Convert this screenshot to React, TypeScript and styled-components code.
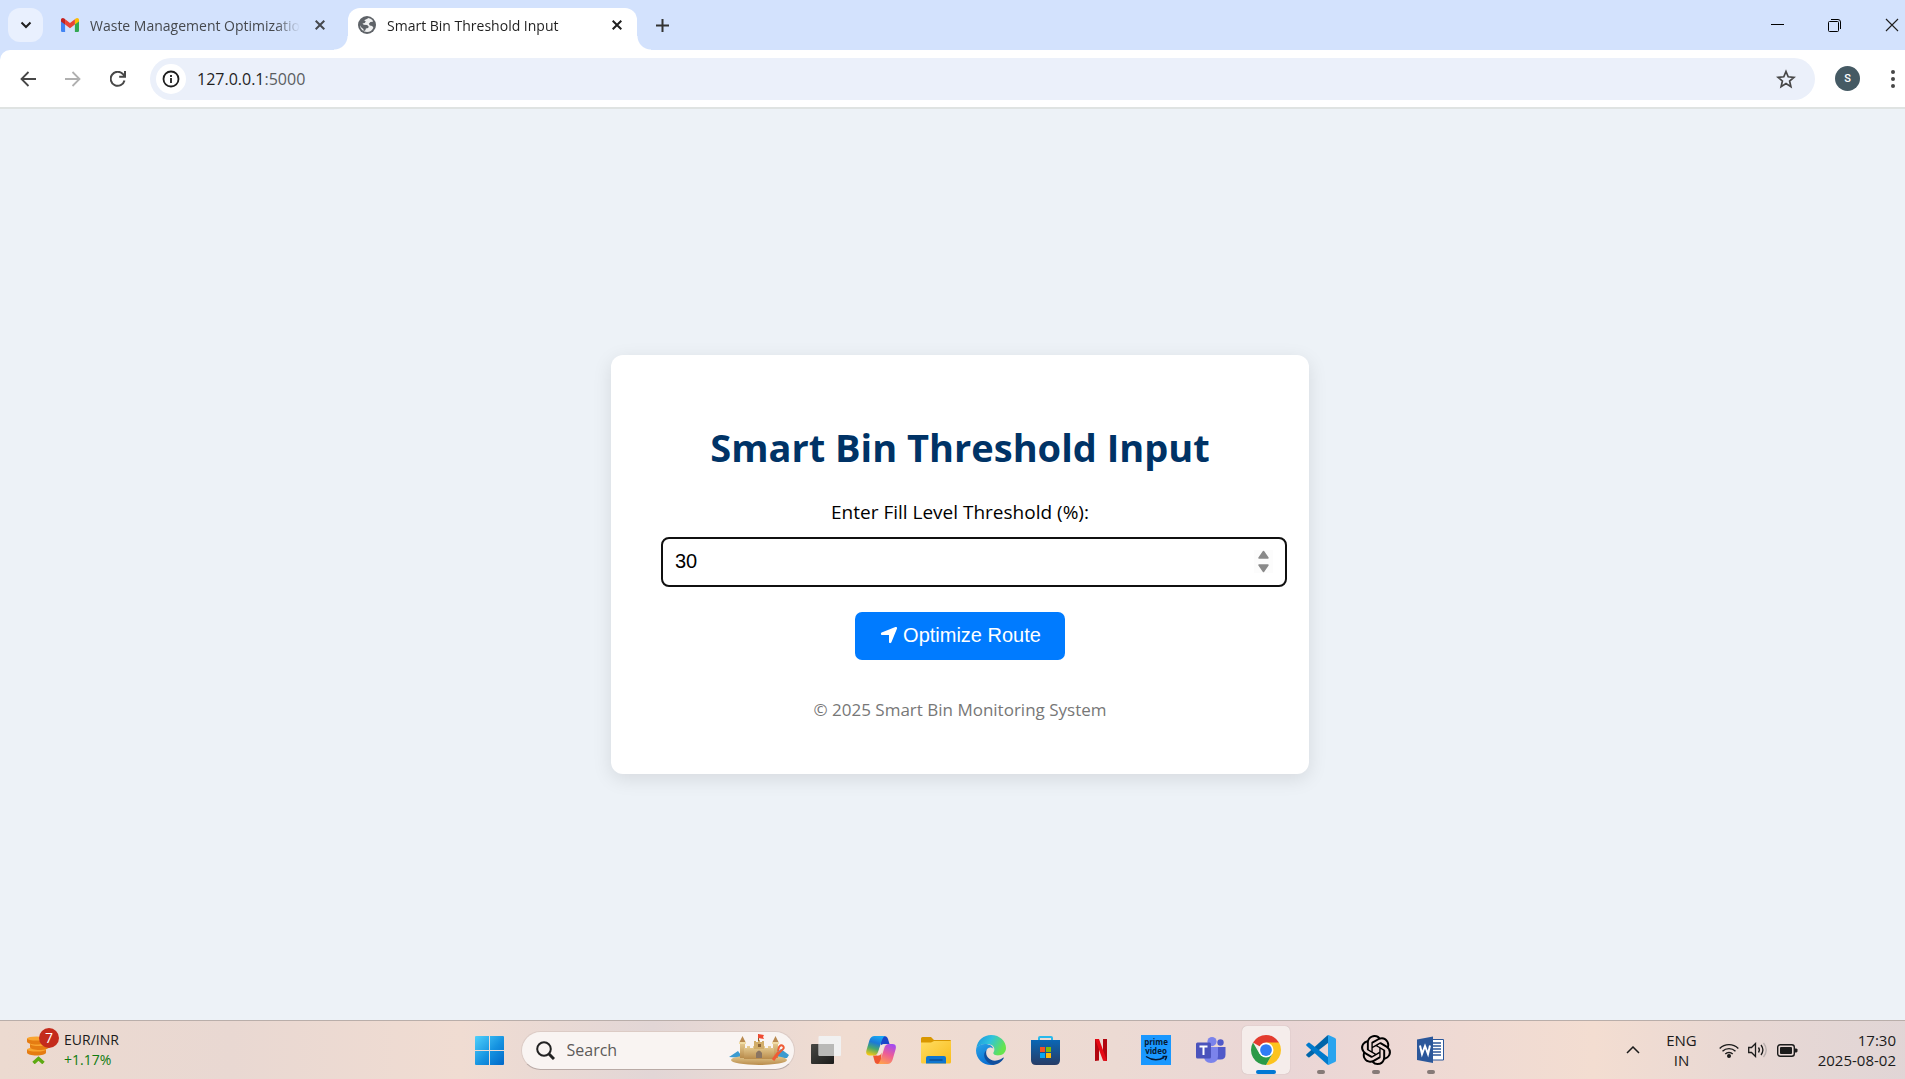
import React from "react";
import styled, { createGlobalStyle, css } from "styled-components";
import { FaLocationArrow } from "react-icons/fa6";

const ui = `"Open Sans", "Noto Sans", sans-serif`;

const GlobalStyle = createGlobalStyle`
  *, *::before, *::after { box-sizing: border-box; }
  html, body { margin: 0; overflow-x: hidden; }
  body { font-family: ${ui}; font-size: 14px; color: #1f1f1f; }
  button { border: 0; padding: 0; background: none; font: inherit; color: inherit; cursor: pointer; }
  svg { display: block; flex: none; }
`;

/* The maximised window runs 15px past the right edge of the viewport. */
const Desktop = styled.div`
  display: flex;
  flex-direction: column;
  width: calc(100% + 15px);
  height: 100vh;
`;

/* ---------- browser chrome ---------- */

const TabStrip = styled.header`
  display: flex;
  align-items: flex-end;
  gap: 8px;
  padding: 8px 0 0 8px;
  background: #d3e2fd;
`;

const StripButton = styled.button<{ $filled?: boolean }>`
  display: grid;
  place-items: center;
  width: 35px;
  height: 34px;
  margin-bottom: 8px;
  border-radius: 12px;
  background: ${(p) => (p.$filled ? "#e9f0fe" : "transparent")};
`;

const Tab = styled.div<{ $active?: boolean }>`
  position: relative;
  display: flex;
  align-items: center;
  width: 289px;
  height: 42px;
  padding: 0 10px 8px;
  border-radius: 12px 12px 0 0;
  color: #45484d;
  ${(p) =>
    p.$active &&
    css`
      background: #fff;
      color: #1f1f1f;
      &::before,
      &::after {
        content: "";
        position: absolute;
        bottom: 0;
        width: 14px;
        height: 14px;
      }
      &::before {
        right: 100%;
        background: radial-gradient(circle at 0 0, transparent 13px, #fff 14px);
      }
      &::after {
        left: 100%;
        background: radial-gradient(circle at 100% 0, transparent 13px, #fff 14px);
      }
    `}
`;

const TabTitle = styled.button`
  flex: 1;
  min-width: 0;
  margin: 0 10px 0 11px;
  padding-top: 2px;
  overflow: hidden;
  white-space: nowrap;
  text-align: left;
  line-height: 20px;
  mask-image: linear-gradient(to right, #000 calc(100% - 24px), transparent);
`;

const TabClose = styled.button`
  display: grid;
  place-items: center;
  width: 20px;
  height: 20px;
`;

const WindowControls = styled.div`
  display: flex;
  align-self: stretch;
  margin-left: auto;
`;

const WindowButton = styled.button`
  display: grid;
  place-items: center;
  width: 57px;
  height: 34px;
`;

const ToolbarBack = styled.div`
  background: #d3e2fd;
`;

const Toolbar = styled.nav`
  display: flex;
  align-items: center;
  gap: 10px;
  height: 59px;
  padding: 0 10px;
  border-bottom: 2px solid #dfe3e2;
  border-radius: 10px 0 0 0;
  background: #fff;
`;

const ToolButton = styled.button`
  display: grid;
  place-items: center;
  width: 35px;
  height: 35px;
`;

const Omnibox = styled.div`
  display: flex;
  flex: 1;
  align-items: center;
  height: 42px;
  margin: 0 5px;
  padding: 0 12px 0 6px;
  border-radius: 21px;
  background: #ebf0fa;
`;

const SiteInfo = styled.button`
  display: grid;
  place-items: center;
  width: 30px;
  height: 30px;
  border-radius: 50%;
  background: #fff;
`;

const Address = styled.div`
  flex: 1;
  margin-left: 11px;
  font-size: 16px;
  line-height: 24px;
  color: #5a5d61;
`;

const Host = styled.span`
  color: #1f1f1f;
`;

const Avatar = styled.span`
  display: grid;
  place-items: center;
  width: 25px;
  height: 25px;
  border-radius: 50%;
  background: #455a64;
  color: #fff;
  font: 500 11px/25px Roboto, sans-serif;
`;

/* ---------- web page ---------- */

const Page = styled.main`
  display: flex;
  flex: 1;
  align-items: center;
  justify-content: center;
  background: #edf2f7;
`;

const Card = styled.section`
  width: 698px;
  padding: 50px;
  border-radius: 12px;
  background: #fff;
  box-shadow: 0 5px 19px rgba(0, 0, 0, 0.1);
  text-align: center;
`;

const Title = styled.h1`
  margin: 15px 0 25px;
  color: #003366;
  font-size: 38px;
  font-weight: 700;
  line-height: 54px;
`;

const Label = styled.label`
  display: block;
  color: #000;
  font-size: 19px;
  line-height: 27px;
`;

const spinner = encodeURIComponent(
  `<svg xmlns="http://www.w3.org/2000/svg" viewBox="0 0 19 23"><rect width="19" height="23" fill="#fcfcfc"/><g fill="#8a8a8a" stroke="#8a8a8a" stroke-width="1.5" stroke-linejoin="round"><path d="M9.500 1.500L14 8H5z"/><path d="M9.500 21.500L14 15H5z"/></g></svg>`
);

const NumberInput = styled.input`
  box-sizing: content-box;
  display: block;
  width: 100%;
  height: 22px;
  margin: 11px 0 25px;
  padding: 11px 12px 13px;
  border: 2px solid #101010;
  border-radius: 8px;
  outline: 0;
  background: #fff;
  color: #000;
  font: 20px/22px "Liberation Sans", Arial, sans-serif;
  &::-webkit-inner-spin-button {
    appearance: none;
    width: 19px;
    height: 23px;
    opacity: 1;
    background: url("data:image/svg+xml,${spinner}") no-repeat center / 19px 23px;
  }
`;

const Submit = styled.button`
  display: inline-flex;
  align-items: center;
  gap: 4px;
  height: 48px;
  padding: 0 24px 2px;
  border-radius: 7px;
  background: #007bff;
  color: #fff;
  font: 20px/24px "Liberation Sans", Arial, sans-serif;
  vertical-align: top;
`;

const Footer = styled.footer`
  margin-top: 36px;
  color: #777;
  font-size: 17px;
  line-height: 28px;
`;

/* ---------- taskbar ---------- */

const Taskbar = styled.footer`
  display: grid;
  grid-template-columns: 1fr auto 1fr;
  align-items: center;
  height: 59px;
  padding: 0 24px;
  border-top: 1px solid #b9aeaa;
  background: linear-gradient(
    90deg,
    #ecdad0 0%,
    #e9d8d2 12%,
    #f0dcd2 24%,
    #e2d6d6 34%,
    #f0dcd1 44%,
    #ecdad3 58%,
    #ead6d6 67%,
    #f3ddd1 83%,
    #e8d8d4 91%,
    #e0d5d6 100%
  );
  color: #1b1b1b;
  line-height: 20px;
`;

const Widget = styled.button`
  display: flex;
  align-items: center;
  justify-self: start;
  gap: 4px;
  text-align: left;
`;

const WidgetIcon = styled.span`
  position: relative;
  padding: 6px 0 0 2px;
  width: 36px;
  height: 40px;
`;

const Badge = styled.span`
  position: absolute;
  top: -2px;
  right: 1px;
  width: 20px;
  height: 20px;
  border-radius: 50%;
  background: #c42b1c;
  color: #fff;
  font-size: 14px;
  text-align: center;
`;

const Gain = styled.span`
  color: #0f7b0f;
`;

const Stack = styled.span<{ $align?: string }>`
  display: flex;
  flex-direction: column;
  align-items: ${(p) => p.$align ?? "flex-start"};
`;

const Apps = styled.div`
  display: flex;
  align-items: center;
  gap: 7px;
`;

const AppButton = styled.button<{ $active?: boolean; $open?: boolean }>`
  position: relative;
  display: grid;
  place-items: center;
  width: 48px;
  height: 48px;
  border-radius: 5px;
  background: ${(p) => (p.$active ? "#f5edeb" : "transparent")};
  box-shadow: ${(p) => (p.$active ? "0 0 1px rgba(0, 0, 0, 0.25)" : "none")};
  ${(p) =>
    (p.$active || p.$open) &&
    css`
      &::after {
        content: "";
        position: absolute;
        bottom: 0;
        left: 50%;
        width: ${p.$active ? 20 : 8}px;
        height: 4px;
        border-radius: 2px;
        background: ${p.$active ? "#0078d4" : "#857a77"};
        transform: translateX(-50%);
      }
    `}
`;

const SearchBox = styled.label`
  display: flex;
  align-items: center;
  width: 274px;
  height: 39px;
  padding: 0 5px 0 14px;
  border: 1px solid #dccbc5;
  border-bottom-color: #b9aaa6;
  border-radius: 20px;
  background: #f9f4f2;
`;

const SearchInput = styled.input`
  flex: 1;
  min-width: 0;
  margin-left: 12px;
  padding: 0;
  border: 0;
  outline: 0;
  background: none;
  font: 16px/22px ${ui};
  &::placeholder {
    color: #5d5a59;
    opacity: 1;
  }
`;

const Tray = styled.div`
  display: flex;
  align-items: center;
  justify-self: end;
  font-size: 15px;
`;

const TrayButton = styled.button<{ $gap: number }>`
  display: flex;
  align-items: center;
  gap: 9px;
  margin-left: ${(p) => p.$gap}px;
`;

/* ---------- drawings ---------- */

const Gmail = () => (
  <svg width="18" height="14" viewBox="0 0 18 14">
    <path d="M0 2.500V12.800Q0 14 1.200 14H4.100V5L0 2z" fill="#4285f4" />
    <path d="M13.900 14H16.800Q18 14 18 12.800V2L13.900 5z" fill="#34a853" />
    <path d="M13.900 1.300V6.500L18 3.400V1.800C18 .2 16 -.6 14.700.6z" fill="#fbbc04" />
    <path d="M4.100 6.500V1.300L9 5l4.900-3.700v5.200L9 10.200z" fill="#ea4335" />
    <path d="M0 1.800V3.400L4.100 6.500V1.300L3.300.6C2-.6 0 .2 0 1.800z" fill="#c5221f" />
  </svg>
);

const Globe = () => (
  <svg width="18" height="18" viewBox="0 0 18 18">
    <circle cx="9" cy="9" r="9" fill="#5f6368" />
    <path
      d="M10.500 2.100 8.300 3.200 6.200 4.300l1.600 1.200-1.100 1.600-2.200.3 1.200 1.300 3.400.2 1.600 1.500-.5 1.700-2.300.5-.5 1.600-1.700 1-.3-2.200-1.800-1.300L2 9.200A7 7 0 0 0 9 16a7 7 0 0 0 6.400-4.200l-1.200-1.700-2.400-.6-1-1.700 1.600-1.800 2.300-.3.400-.7A7 7 0 0 0 10.500 2.100z"
      fill="#fff"
      opacity=".9"
    />
  </svg>
);

const Cross = ({ size = 10, weight = 2 }) => (
  <svg width={size} height={size} viewBox="0 0 10 10">
    <path d="M.7.7l8.600 8.600M9.300.7L.7 9.300" stroke="currentColor" strokeWidth={weight} />
  </svg>
);

const Arrow = ({ flip = false, color = "#474747" }) => (
  <svg width="16" height="16" viewBox="0 0 16 16" fill="none" stroke={color} strokeWidth="1.800">
    <path d={flip ? "M0 8h14M7.500 1l7 7-7 7" : "M16 8H2M8.500 1l-7 7 7 7"} />
  </svg>
);

const Castle = () => (
  <svg width="60" height="32" viewBox="0 0 60 32">
    <defs>
      <linearGradient id="sand" x2="0" y2="1">
        <stop stopColor="#e8cf95" />
        <stop offset="1" stopColor="#b98c4c" />
      </linearGradient>
    </defs>
    <path d="M0 23l9-6 5 7zM46 20l6-5 8 6-2 3H46z" fill="#3c9bd0" />
    <ellipse cx="30" cy="26" rx="28" ry="5" fill="url(#sand)" />
    <path d="M11 8h5v16h-5zM44 8h5v16h-5z" fill="url(#sand)" />
    <path d="M15 14h3v-2h3v2h3v-2h3v2h6v-2h3v2h3v-2h3v2h3v11H15z" fill="url(#sand)" />
    <path d="M25 7h2v1h2V6h2v2h2V7h2v8H25z" fill="#d2ad69" />
    <path d="M13.500 2l3 6h-6zM46.500 2l3 6h-6z" fill="#b98a50" />
    <path d="M10 8h7v2h-7zM43 8h7v2h-7z" fill="#f0dca6" />
    <path d="M27 24v-5q3-5 6 0v5z" fill="#8a7562" />
    <path d="M29 10h3v3h-3z" fill="#8a6539" />
    <path d="M29.500 0v7" stroke="#8b5a2b" />
    <path d="M29 0l6 1-1 2 1 2-6-1z" fill="#ef4b32" />
    <path d="M44 26l6-8" stroke="#ef5b35" strokeWidth="3" />
    <path d="M49 17l1-4q2-3 4-1t-1 4l-3 3" stroke="#ef5b35" strokeWidth="2" fill="none" />
  </svg>
);

const Coins = () => (
  <svg width="24" height="28" viewBox="0 0 24 28">
    {[11, 5.5, 0].map((y, i) => (
      <g key={y} transform={`translate(${i === 1 ? 4 : 1} ${y})`}>
        <path d="M0 2.500v3c0 4 19 4 19 0v-3z" fill="#e57c12" />
        <ellipse cx="9.500" cy="2.500" rx="9.500" ry="2" fill="#f9a530" />
      </g>
    ))}
    <path d="M7.500 27l5-4.500 5 4.500" fill="none" stroke="#5eaa12" strokeWidth="3.500" />
  </svg>
);

const Windows = () => (
  <svg width="29" height="29" viewBox="0 0 29 29">
    <defs>
      <linearGradient id="win" x2="1" y2="1">
        <stop stopColor="#4fd0fb" />
        <stop offset=".55" stopColor="#1592e0" />
        <stop offset="1" stopColor="#0067c8" />
      </linearGradient>
    </defs>
    <path
      d="M1 0H14V14H0V1Q0 0 1 0zM15 0H28Q29 0 29 1V14H15zM0 15H14V29H1Q0 29 0 28zM15 15H29V28Q29 29 28 29H15z"
      fill="url(#win)"
    />
  </svg>
);

const TaskView = () => (
  <svg width="30" height="30" viewBox="0 0 30 30">
    <defs>
      <linearGradient id="tvd" x2="1" y2="1">
        <stop stopColor="#484844" />
        <stop offset="1" stopColor="#1c1c1b" />
      </linearGradient>
    </defs>
    <rect x="0" y="9" width="23" height="20" rx="1" fill="url(#tvd)" />
    <rect x="7.500" y="1" width="22.500" height="20" rx="1" fill="#f1f1f1" />
    <path d="M8 9h15v12H8z" fill="#b9b9b7" />
  </svg>
);

const Copilot = () => (
  <svg width="30" height="28" viewBox="0 0 30 28">
    <defs>
      <linearGradient id="cpa" x1=".6" y1="0" x2=".3" y2="1">
        <stop stopColor="#18a7f2" />
        <stop offset=".35" stopColor="#1b79d8" />
        <stop offset=".65" stopColor="#4aa86b" />
        <stop offset="1" stopColor="#f3c712" />
      </linearGradient>
      <linearGradient id="cpb" x1=".7" y1="0" x2=".3" y2="1">
        <stop stopColor="#a44bf0" />
        <stop offset=".5" stopColor="#ee5d95" />
        <stop offset="1" stopColor="#ffa04f" />
      </linearGradient>
    </defs>
    <path d="M15 0h3q3 0 4 3l1.500 5H19q-3 0-4 3z" fill="#1946c9" />
    <path d="M15 28h-3q-3 0-3.500-3L7 19.500h4.500q3 0 4-3z" fill="#ef5530" />
    <path d="M8.500 0H19q-2 1-3 4l-4 12q-1.200 3.500-4.500 3.500H3.500Q-.7 19.500.4 14.500L3.500 4Q5 0 8.500 0z" fill="url(#cpa)" />
    <path d="M21.500 28H11.500q2-1 3-4l4-12.500Q19.500 8 23 8h3.500q4.200 0 3.200 5L26.500 24q-1.500 4-5 4z" fill="url(#cpb)" />
    <path d="M14.500 9.500q.8-1.500 4.500-1.500-1 1-1.500 3l-2.500 7q-.8 1.500-4 1.500 1-1 1.500-3z" fill="#f4e3de" />
  </svg>
);

const Folder = () => (
  <svg width="30" height="27" viewBox="0 0 30 27">
    <defs>
      <linearGradient id="fold" x2="1" y2="1">
        <stop stopColor="#ffdc61" />
        <stop offset="1" stopColor="#f9bd1b" />
      </linearGradient>
    </defs>
    <path d="M0 1.500Q0 0 1.500 0H10l3 3h16q1 0 1 1v4H0z" fill="#d99700" />
    <path d="M0 5.500h10L13 4h17v21q0 1.500-1.500 1.500h-27Q0 26.500 0 25z" fill="url(#fold)" />
    <path d="M5 26.500V21q0-2 2-2h16q2 0 2 2v5.500z" fill="#0f76cf" />
    <path d="M9 23h12" stroke="#0b4f96" strokeWidth="1.500" strokeLinecap="round" />
  </svg>
);

const Edge = () => (
  <svg width="30" height="30" viewBox="0 0 30 30">
    <defs>
      <linearGradient id="edt" x2="1" y2=".4">
        <stop stopColor="#1a8fe0" />
        <stop offset=".5" stopColor="#2fc3dd" />
        <stop offset="1" stopColor="#66e44d" />
      </linearGradient>
      <linearGradient id="edl" x2=".5" y2="1">
        <stop stopColor="#2aa5e8" />
        <stop offset="1" stopColor="#0a6fd2" />
      </linearGradient>
    </defs>
    <path d="M.3 13C1.500 5 8 0 15 0c9 0 15 6.500 15 13 0 5-4 7.500-8 7.500-3.500 0-5.500-1.500-4.500-3 2-3 1-8-6-8.500C6 8.600 2 10.500.3 13z" fill="url(#edt)" />
    <path d="M.3 13C3 8.500 10 8 14 10c2 1 3 2.500 3.200 4-2-3-7-1.500-7.500 3.500C9.200 23 13 28 18 29.700 9 31.500 0 25 0 15.500z" fill="url(#edl)" />
    <path d="M10.500 15c-2 7 4.500 12 11 10.300 2.500-.5 4-1.600 5.500-2.600.6-.3 1 .2.600.9C25.500 27 21.500 29.800 17 30 8 27 6 19 10.500 15z" fill="#104f9e" />
    <path d="M12 14.500c1.500-2.500 5-2.500 5.200.5.200 1-.5 2-.3 3 .7 2.500 5 3.300 8 2.100-3 3.500-8 3.500-11 .5-2-2-2.700-4.500-1.900-6.100z" fill="#f0dfd7" />
  </svg>
);

const Store = () => (
  <svg width="29" height="29" viewBox="0 0 29 29">
    <defs>
      <linearGradient id="sto" x2="0" y2="1">
        <stop stopColor="#0a67b5" />
        <stop offset="1" stopColor="#273c66" />
      </linearGradient>
    </defs>
    <path d="M8 6V2q0-1 1-1h11q1 0 1 1v4" fill="none" stroke="#28b9ec" strokeWidth="2" />
    <path d="M0 4h29v20q0 5-5 5H5q-5 0-5-5z" fill="url(#sto)" />
    <path d="M9 11h5v5H9z" fill="#f35325" />
    <path d="M15 11h5v5h-5z" fill="#81bc06" />
    <path d="M9 17h5v5H9z" fill="#05a6f0" />
    <path d="M15 17h5v5h-5z" fill="#ffba08" />
  </svg>
);

const Netflix = () => (
  <svg width="12" height="22" viewBox="0 0 12 22">
    <path d="M0 0h4v21.500L0 22zM8 0h4v22l-4-.5z" fill="#b1060f" />
    <path d="M0 0h4l8 22-4-.5z" fill="#e50914" />
  </svg>
);

const PrimeVideo = () => (
  <svg width="30" height="30" viewBox="0 0 30 30">
    <path d="M0 0h30v30H0z" fill="#1a98ff" />
    <g fill="#071a33" fontFamily="Open Sans, sans-serif" fontWeight="700" fontSize="8" textAnchor="middle">
      <text x="15" y="10">prime</text>
      <text x="15" y="19">video</text>
    </g>
    <path d="M5 21.500q9 6 18 1M21.500 21.500h4q0 1.500-1.500 3.500" fill="none" stroke="#071a33" strokeWidth="1.500" />
  </svg>
);

const Teams = () => (
  <svg width="30" height="27" viewBox="0 0 30 27">
    <circle cx="24.500" cy="5.500" r="3.200" fill="#5059c9" />
    <path d="M20 10h9.500v7.500q0 5-5 5H20z" fill="#5059c9" />
    <circle cx="16" cy="4.600" r="4.600" fill="#7b83eb" />
    <path d="M8 10h14v9q0 7-7 7t-7-7z" fill="#7b83eb" />
    <rect y="5.500" width="15" height="16" rx="1.500" fill="#4b53bc" />
    <path d="M3.500 9.500h8M7.500 9.500V18" stroke="#fff" strokeWidth="2" />
  </svg>
);

const Chrome = () => (
  <svg width="30" height="30" viewBox="0 0 48 48">
    <path d="M24 24L3.220 12A24 24 0 0 1 44.780 12z" fill="#e33b2e" />
    <path d="M24 12H44.780A24 24 0 0 1 24 48L34.400 30z" fill="#fcc31e" />
    <path d="M13.600 30L3.220 12A24 24 0 0 0 24 48L34.400 30z" fill="#2b9a47" />
    <circle cx="24" cy="24" r="12" fill="#fff" />
    <circle cx="24" cy="24" r="9.400" fill="#2f7cf6" />
  </svg>
);

const VsCode = () => (
  <svg width="30" height="30" viewBox="0 0 30 30">
    <path d="M22 8L3.500 22.300q-.6.400-1.200 0L.5 20.700q-.7-.7 0-1.400L21 .7 22.500 0z" fill="#0065a9" />
    <path d="M22 22L3.500 7.700q-.6-.4-1.200 0L.5 9.300q-.7.700 0 1.400L21 29.300l1.500.7z" fill="#007acc" />
    <path d="M22 .2q.4-.3 1 0l6 2.900q1 .5 1 1.500v20.800q0 1-1 1.500l-6 2.900q-.8.300-1.500-.5.500.2.500-.8v-27q0-1-.5-.8z" fill="#2aa4ee" />
  </svg>
);

const OpenAI = () => (
  <svg width="30" height="30" viewBox="0 0 24 24">
    <path d="M22.2819 9.8211a5.9847 5.9847 0 0 0-.5157-4.9108 6.0462 6.0462 0 0 0-6.5098-2.9A6.0651 6.0651 0 0 0 4.9807 4.1818a5.9847 5.9847 0 0 0-3.9977 2.9 6.0462 6.0462 0 0 0 .7427 7.0966 5.98 5.98 0 0 0 .511 4.9107 6.051 6.051 0 0 0 6.5146 2.9001A5.9847 5.9847 0 0 0 13.2599 24a6.0557 6.0557 0 0 0 5.7718-4.2058 5.9894 5.9894 0 0 0 3.9977-2.9001 6.0557 6.0557 0 0 0-.7475-7.0729zm-9.022 12.6081a4.4755 4.4755 0 0 1-2.8764-1.0408l.1419-.0804 4.7783-2.7582a.7948.7948 0 0 0 .3927-.6813v-6.7369l2.02 1.1686a.071.071 0 0 1 .038.052v5.5826a4.504 4.504 0 0 1-4.4945 4.4944zm-9.6607-4.1254a4.4708 4.4708 0 0 1-.5346-3.0137l.142.0852 4.783 2.7582a.7712.7712 0 0 0 .7806 0l5.8428-3.3685v2.3324a.0804.0804 0 0 1-.0332.0615L9.74 19.9502a4.4992 4.4992 0 0 1-6.1408-1.6464zM2.3408 7.8956a4.485 4.485 0 0 1 2.3655-1.9728V11.6a.7664.7664 0 0 0 .3879.6765l5.8144 3.3543-2.0201 1.1685a.0757.0757 0 0 1-.071 0l-4.8303-2.7865A4.504 4.504 0 0 1 2.3408 7.872zm16.5963 3.8558L13.1038 8.364 15.1192 7.2a.0757.0757 0 0 1 .071 0l4.8303 2.7913a4.4944 4.4944 0 0 1-.6765 8.1042v-5.6772a.79.79 0 0 0-.407-.667zm2.0107-3.0231l-.142-.0852-4.7735-2.7818a.7759.7759 0 0 0-.7854 0L9.409 9.2297V6.8974a.0662.0662 0 0 1 .0284-.0615l4.8303-2.7866a4.4992 4.4992 0 0 1 6.6802 4.66zM8.3065 12.863l-2.02-1.1638a.0804.0804 0 0 1-.038-.0567V6.0742a4.4992 4.4992 0 0 1 7.3757-3.4537l-.142.0805L8.704 5.459a.7948.7948 0 0 0-.3927.6813zm1.0976-2.3654l2.602-1.4998 2.6069 1.4998v2.9994l-2.5974 1.4997-2.6067-1.4997Z" />
  </svg>
);

const Word = () => (
  <svg width="28" height="28" viewBox="0 0 28 28">
    <path d="M14 3.500h12.500V24H14z" fill="#fff" stroke="#2b579a" />
    <path d="M16 7h8M16 10h8M16 13h8M16 16h8M16 19h8" stroke="#2b579a" strokeWidth="1.500" />
    <path d="M0 3.500L16 .5v26.500L0 24z" fill="#2b579a" />
    <path d="M3 9.500l2 8.500L8 10l3 8 2-8.500" fill="none" stroke="#fff" strokeWidth="2" />
  </svg>
);

const apps = [
  { name: "Task view", Icon: TaskView },
  { name: "Copilot", Icon: Copilot },
  { name: "File Explorer", Icon: Folder },
  { name: "Edge", Icon: Edge },
  { name: "Store", Icon: Store },
  { name: "Netflix", Icon: Netflix },
  { name: "Prime Video", Icon: PrimeVideo },
  { name: "Teams", Icon: Teams },
  { name: "Chrome", Icon: Chrome, active: true },
  { name: "VS Code", Icon: VsCode, open: true },
  { name: "ChatGPT", Icon: OpenAI, open: true },
  { name: "Word", Icon: Word, open: true },
];

export default function App() {
  return (
    <>
      <GlobalStyle />
      <Desktop>
        <TabStrip>
          <StripButton $filled aria-label="Search tabs">
            <svg width="12" height="8" viewBox="0 0 12 8">
              <path d="M1.500 1.500L6 6l4.500-4.500" fill="none" stroke="#1f1f1f" strokeWidth="2" />
            </svg>
          </StripButton>
          <Tab>
            <Gmail />
            <TabTitle>Waste Management Optimization</TabTitle>
            <TabClose aria-label="Close tab"><Cross /></TabClose>
          </Tab>
          <Tab $active>
            <Globe />
            <TabTitle>Smart Bin Threshold Input</TabTitle>
            <TabClose aria-label="Close tab"><Cross /></TabClose>
          </Tab>
          <StripButton aria-label="New tab">
            <svg width="13" height="13" viewBox="0 0 13 13">
              <path d="M6.500 0v13M0 6.500h13" stroke="#333" strokeWidth="2" />
            </svg>
          </StripButton>
          <WindowControls>
            <WindowButton aria-label="Minimize">
              <svg width="13" height="13" viewBox="0 0 13 13"><path d="M0 5.500h13" stroke="#000" /></svg>
            </WindowButton>
            <WindowButton aria-label="Restore">
              <svg width="13" height="13" viewBox="0 0 13 13" fill="none" stroke="#000">
                <rect x=".5" y="2.500" width="10" height="10" rx="1" />
                <path d="M3 .5h7q2.500 0 2.500 2.500v7" />
              </svg>
            </WindowButton>
            <WindowButton aria-label="Close"><Cross size={14} weight={0.8} /></WindowButton>
          </WindowControls>
        </TabStrip>
        <ToolbarBack>
          <Toolbar>
            <ToolButton aria-label="Back"><Arrow /></ToolButton>
            <ToolButton aria-label="Forward"><Arrow flip color="#b0b0b0" /></ToolButton>
            <ToolButton aria-label="Reload">
              <svg width="16" height="16" viewBox="0 0 16 16" fill="none" stroke="#474747" strokeWidth="2">
                <path d="M14.500 9.500A7 7 0 1 1 13 3.200L15 5.500M15 0v5.800H9.200" />
              </svg>
            </ToolButton>
            <Omnibox>
              <SiteInfo aria-label="Site information">
                <svg width="18" height="18" viewBox="0 0 18 18" fill="none" stroke="#1f1f1f" strokeWidth="1.800">
                  <circle cx="9" cy="9" r="7.500" />
                  <path d="M9 8v5M9 5v2" />
                </svg>
              </SiteInfo>
              <Address><Host>127.0.0.1</Host>:5000</Address>
              <ToolButton aria-label="Bookmark">
                <svg width="20" height="20" viewBox="0 0 20 20">
                  <path d="M10 2.500l2.200 5.300 5.700.5-4.300 3.700 1.300 5.600L10 14.600l-4.900 3 1.300-5.600-4.300-3.700 5.700-.5z" fill="none" stroke="#474747" strokeWidth="1.700" />
                </svg>
              </ToolButton>
            </Omnibox>
            <ToolButton aria-label="Profile"><Avatar>S</Avatar></ToolButton>
            <ToolButton aria-label="Menu">
              <svg width="4" height="18" viewBox="0 0 4 18" fill="#474747">
                <circle cx="2" cy="2" r="2" /><circle cx="2" cy="9" r="2" /><circle cx="2" cy="16" r="2" />
              </svg>
            </ToolButton>
          </Toolbar>
        </ToolbarBack>

        <Page>
          <Card>
            <Title>Smart Bin Threshold Input</Title>
            <Label htmlFor="threshold">Enter Fill Level Threshold (%):</Label>
            <NumberInput id="threshold" type="number" defaultValue={30} />
            <Submit type="button"><FaLocationArrow size={20} />Optimize Route</Submit>
            <Footer>© 2025 Smart Bin Monitoring System</Footer>
          </Card>
        </Page>

        <Taskbar>
          <Widget>
            <WidgetIcon><Coins /><Badge>7</Badge></WidgetIcon>
            <Stack>
              <span>EUR/INR</span>
              <Gain>+1.17%</Gain>
            </Stack>
          </Widget>
          <Apps>
            <AppButton aria-label="Start"><Windows /></AppButton>
            <SearchBox>
              <svg width="19" height="19" viewBox="0 0 19 19" fill="none" stroke="#222" strokeWidth="2">
                <circle cx="8" cy="8" r="6.800" />
                <path d="M13 13l5 5" strokeWidth="3" />
              </svg>
              <SearchInput placeholder="Search" aria-label="Search" />
              <Castle />
            </SearchBox>
            {apps.map(({ name, Icon, active, open }) => (
              <AppButton key={name} aria-label={name} $active={active} $open={open}><Icon /></AppButton>
            ))}
          </Apps>
          <Tray>
            <TrayButton $gap={0} aria-label="Hidden icons">
              <svg width="14" height="8" viewBox="0 0 14 8">
                <path d="M1 7l6-6 6 6" fill="none" stroke="#1b1b1b" strokeWidth="1.500" />
              </svg>
            </TrayButton>
            <TrayButton $gap={26}>
              <Stack $align="center"><span>ENG</span><span>IN</span></Stack>
            </TrayButton>
            <TrayButton $gap={22} aria-label="Network, volume and battery">
              <svg width="20" height="15" viewBox="0 0 20 15" fill="none" stroke="#1b1b1b" strokeWidth="1.400">
                <path d="M.7 5.500a13 13 0 0 1 18.600 0M3.500 8.300a9.200 9.200 0 0 1 13 0M6.300 11a5.300 5.300 0 0 1 7.400 0" />
                <circle cx="10" cy="13" r="1.300" fill="#1b1b1b" />
              </svg>
              <svg width="20" height="16" viewBox="0 0 20 16" fill="none" stroke="#1b1b1b" strokeWidth="1.300">
                <path d="M.7 5.500h2.800L7.500 1.500v13L3.500 10.500H.7z" />
                <path d="M10.500 5.500q1.800 2.500 0 5M13 3q3.800 5 0 10" />
                <path d="M15.500 1q5.500 7 0 14" stroke="#b9afae" />
              </svg>
              <svg width="21" height="13" viewBox="0 0 21 13" fill="#1b1b1b">
                <rect x=".7" y=".7" width="16.600" height="11.600" rx="2.500" fill="none" stroke="#1b1b1b" strokeWidth="1.400" />
                <rect x="3" y="3" width="12" height="7" rx="1" />
                <path d="M18 4.500h1.500l1 1v2l-1 1H18z" />
              </svg>
            </TrayButton>
            <TrayButton $gap={20}>
              <Stack $align="flex-end"><span>17:30</span><span>2025-08-02</span></Stack>
            </TrayButton>
          </Tray>
        </Taskbar>
      </Desktop>
    </>
  );
}
